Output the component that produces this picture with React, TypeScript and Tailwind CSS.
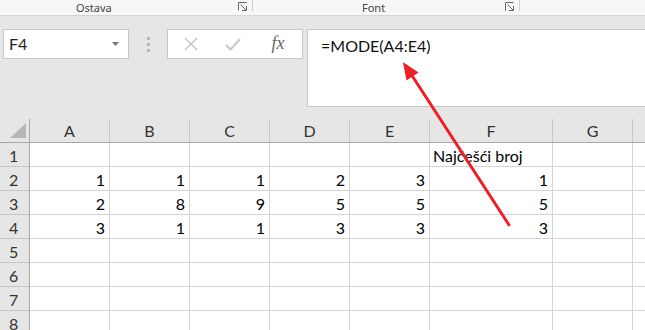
const cols = [
  { l: 'A', w: 80 },
  { l: 'B', w: 80 },
  { l: 'C', w: 80 },
  { l: 'D', w: 80 },
  { l: 'E', w: 80 },
  { l: 'F', w: 123 },
  { l: 'G', w: 80 },
  { l: '', w: 80 },
];

const rows: (string | number | null)[][] = [
  [null, null, null, null, null, 'Najčešći broj', null, null],
  [1, 1, 1, 2, 3, 1, null, null],
  [2, 8, 9, 5, 5, 5, null, null],
  [3, 1, 1, 3, 3, 3, null, null],
  [null, null, null, null, null, null, null, null],
  [null, null, null, null, null, null, null, null],
  [null, null, null, null, null, null, null, null],
  [null, null, null, null, null, null, null, null],
];

const cellFont = { fontFamily: 'Lato, "Open Sans", sans-serif' };

function Launcher() {
  return (
    <svg width="10" height="9" viewBox="0 0 10 9" className="text-[#666]">
      <path d="M0.5 0.5h8M0.5 0.5v8" stroke="currentColor" fill="none" />
      <path d="M2.5 2.5l5.5 5.5" stroke="currentColor" fill="none" />
      <path d="M8.5 4v4.5H4" stroke="currentColor" fill="none" />
    </svg>
  );
}

export default function App() {
  return (
    <div className="relative w-[645px] h-[330px] overflow-hidden bg-[#e6e6e6]">
      {/* Ribbon group labels */}
      <div
        className="flex h-[16px] bg-[#f7f7f7] border-b border-[#d5d5d5] text-[11px] text-[#444] leading-[15px]"
        style={{ fontFamily: '"Noto Sans", "Open Sans", sans-serif' }}
      >
        <div className="w-[238px] pl-[76px]">Ostava</div>
        <div className="w-[14px] flex pt-[2px]"><Launcher /></div>
        <div className="w-px h-[11px] bg-[#d0d0d0]" />
        <div className="w-[252px] pl-[109px]">Font</div>
        <div className="w-[14px] flex pt-[2px]"><Launcher /></div>
        <div className="w-px h-[11px] bg-[#d0d0d0]" />
      </div>

      {/* Formula bar */}
      <div className="flex items-start pt-[13px] pl-[3px]" style={cellFont}>
        <div className="w-[126px] h-[30px] bg-white border border-[#c6c6c6] flex items-center justify-between pl-[5px] pr-[9px]">
          <span className="text-[16px] text-[#222]">F4</span>
          <svg width="7" height="4" viewBox="0 0 7 4">
            <path d="M0 0h7L3.5 4z" fill="#777" />
          </svg>
        </div>
        <div className="w-[38px] h-[30px] flex flex-col items-center justify-center gap-[3px]">
          <div className="w-[3px] h-[3px] bg-[#b5b5b5]" />
          <div className="w-[3px] h-[3px] bg-[#b5b5b5]" />
          <div className="w-[3px] h-[3px] bg-[#b5b5b5]" />
        </div>
        <div className="w-[136px] h-[30px] bg-white border border-[#c6c6c6] flex items-center">
          <div className="w-[42px] flex justify-center pl-[3px]">
            <svg width="14" height="14" viewBox="0 0 14 14">
              <path d="M1 1l12 12M13 1L1 13" stroke="#c4c4c4" strokeWidth="1.4" />
            </svg>
          </div>
          <div className="w-[46px] flex justify-center">
            <svg width="16" height="13" viewBox="0 0 16 13">
              <path d="M1 7l4.5 4.5L15 1" stroke="#cacaca" strokeWidth="2.2" fill="none" />
            </svg>
          </div>
          <div
            className="w-[44px] flex justify-center italic text-[18px] text-[#666] leading-none -mt-[2px]"
            style={{ fontFamily: '"Liberation Serif", serif' }}
          >
            fx
          </div>
        </div>
        <div className="ml-[4px] flex-1 h-[78px] bg-white border border-[#c6c6c6] border-r-0 pl-[13px] pt-[4px] text-[16px] text-[#111]">
          =MODE(A4:E4)
        </div>
      </div>

      {/* Grid */}
      <div className="mt-[12px]" style={cellFont}>
        <div className="flex h-[24px]">
          <div className="relative w-[30px] shrink-0 border-r border-b border-[#a8a8a8]">
            <svg className="absolute left-0 top-0" width="30" height="23" viewBox="0 0 30 23">
              <polygon points="26,4 26,19 10,19" fill="#b6b6b6" />
            </svg>
          </div>
          {cols.map((c, i) => (
            <div
              key={i}
              style={{ width: c.w }}
              className="shrink-0 flex items-center justify-center border-b border-[#a8a8a8] border-r border-r-[#c6c6c6] text-[16px] text-[#333] pt-[1px]"
            >
              {c.l}
            </div>
          ))}
        </div>
        {rows.map((r, ri) => (
          <div key={ri} className="flex h-[24px]">
            <div className="w-[30px] shrink-0 flex items-center pl-[9px] border-r border-[#a8a8a8] border-b border-b-[#c6c6c6] text-[16px] text-[#333] pt-[2px]">
              {ri + 1}
            </div>
            {r.map((v, ci) => (
              <div
                key={ci}
                style={{ width: cols[ci].w }}
                className={`shrink-0 flex items-center bg-white border-r border-b border-[#d4d4d4] text-[16px] text-black pt-[2px] ${
                  typeof v === 'number' ? 'justify-end pr-[4px]' : 'justify-start pl-[3px]'
                }`}
              >
                {v}
              </div>
            ))}
          </div>
        ))}
      </div>

      {/* Red arrow overlay */}
      <svg className="absolute left-0 top-0 pointer-events-none" width="645" height="330" viewBox="0 0 645 330">
        <line x1="509" y1="225" x2="411" y2="74" stroke="#e8212b" strokeWidth="3" strokeLinecap="round" />
        <polygon points="403,62 418.5,72.5 406.5,80.5" fill="#e8212b" />
      </svg>
    </div>
  );
}
